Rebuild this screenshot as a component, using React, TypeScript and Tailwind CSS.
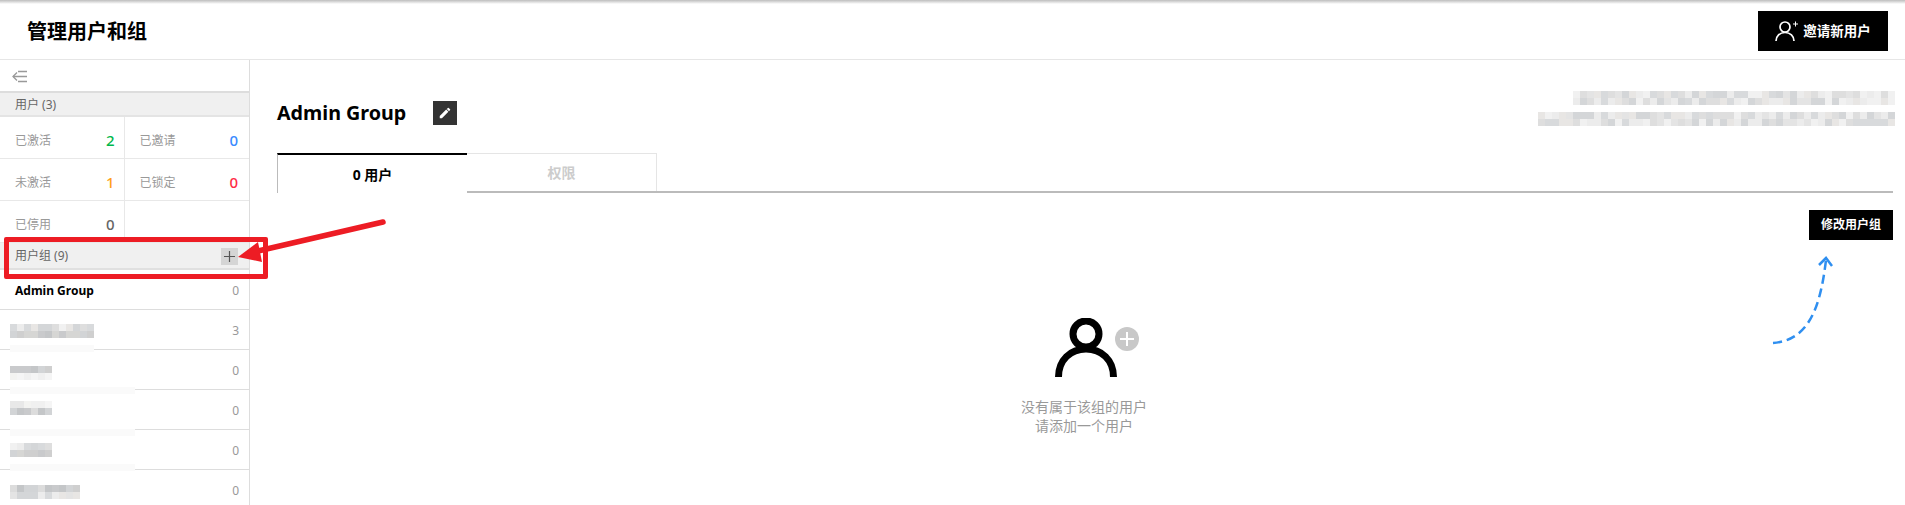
import React from "react";

const dark = ["#c9cacc", "#d2d4d6", "#cfcfcf", "#c4c6c8", "#d6d6d4", "#dcdcdc"];
const mid = ["#e4e4e4", "#d8dadc", "#ececec", "#dedede", "#e8e6e4", "#f1f1f1", "#d4d6d8"];
const light = ["#f0f0f0", "#ececec", "#f5f5f5", "#e8e8e8", "#f3f3f1"];

function hash(n: number) {
  const x = Math.sin(n * 12.9898) * 43758.5453;
  return x - Math.floor(x);
}

function Mosaic({ w, tones, cell, seed }: { w: number; tones: string[][]; cell: number; seed: number }) {
  const cols = Math.round(w / cell);
  const items = [];
  for (let r = 0; r < tones.length; r++) {
    for (let i = 0; i < cols; i++) {
      const t = tones[r];
      const c = t[Math.floor(hash(i + r * 97 + seed * 31 + 1) * t.length)];
      items.push(<div key={`${r}-${i}`} style={{ width: cell, height: cell, background: c }} />);
    }
  }
  return (
    <div className="flex flex-wrap" style={{ width: cols * cell }}>
      {items}
    </div>
  );
}

function Stat({ label, value, color, border }: { label: string; value?: string; color?: string; border?: boolean }) {
  return (
    <div className={`flex h-[42px] items-center justify-between border-b border-[#e8e8e8] pl-[15px] pt-[6px] ${border ? "border-r pr-[9px]" : "pr-[11px]"}`}>
      <span className="text-[12px] text-[#999]">{label}</span>
      {value && <span className={`text-[15px] font-medium ${color}`}>{value}</span>}
    </div>
  );
}

function GroupRow({ w, seed, count, smudge, smudgeTop, tones, top }: { w: number; seed: number; count: string; smudge: number; smudgeTop: number; tones: string[][]; top: number }) {
  return (
    <div className="relative flex h-10 items-start justify-between border-b border-[#ddd] pl-[10px] pr-[10px]">
      <div style={{ marginTop: top }}>
        <Mosaic w={w} tones={tones} cell={7} seed={seed} />
      </div>
      <span className="mt-[12px] text-[12px] text-[#999]">{count}</span>
      <div className="absolute left-[10px] h-[7px] bg-[#fafafa]" style={{ top: smudgeTop, width: smudge }} />
    </div>
  );
}

export default function App() {
  return (
    <div className="relative h-[505px] w-[1905px] overflow-hidden bg-white font-['Noto_Sans','Noto_Sans_CJK_SC',sans-serif]">
      <div className="h-[4px] bg-gradient-to-b from-[#bdbdbd] to-white" />
      <header className="flex h-[56px] items-center justify-between border-b border-[#e6e6e6] pl-[27px] pr-[17px]">
        <h1 className="text-[20px] font-bold text-black">管理用户和组</h1>
        <button className="mt-[-1px] flex h-10 w-[130px] items-center justify-center gap-[3px] bg-black text-[13.5px] font-bold text-white">
          <svg width="25" height="22" viewBox="0 0 25 22" fill="none" stroke="white" strokeWidth="1.7">
            <circle cx="10" cy="7" r="5" />
            <path d="M1 21c0-5 3.800-8.500 9-8.500s9 3.500 9 8.500" />
            <path d="M18 4h5M20.500 1.500v5" strokeWidth="1" />
          </svg>
          邀请新用户
        </button>
      </header>

      <div className="flex h-[445px]">
        <aside className="w-[250px] shrink-0 border-r border-[#ddd]">
          <div className="flex h-[31px] items-center pl-[12px] pt-[2px]">
            <svg width="16" height="14" viewBox="0 0 16 14" fill="none" stroke="#999" strokeWidth="1.3">
              <path d="M5 2.500 1 6.500 5 10.500" />
              <path d="M1 6.500h14M6 1.500h9M6 11.500h9" />
            </svg>
          </div>
          <div className="flex h-[26px] items-center border-y-2 border-t-[#ddd] border-b-[#e4e4e4] bg-[#f0f0f0] pl-[15px] pt-[1px] text-[12px] text-[#666]">
            用户 (3)
          </div>
          <div className="grid grid-cols-2">
            <Stat label="已激活" value="2" color="text-[#00b84c]" border />
            <Stat label="已邀请" value="0" color="text-[#3b8bff]" />
            <Stat label="未激活" value="1" color="text-[#ff9f1a]" border />
            <Stat label="已锁定" value="0" color="text-[#ff2d46]" />
            <Stat label="已停用" value="0" color="text-[#666]" border />
            <Stat label="" />
          </div>
          <div className="flex h-[27px] items-center justify-between border-b-2 border-[#e0e0e0] bg-[#f0f0f0] pl-[15px] pr-[11px] pt-[1px] text-[12px] text-[#666]">
            <span>用户组 (9)</span>
            <span className="flex h-[17px] w-[17px] items-center justify-center bg-[#d5d5d5]">
              <svg width="11" height="11" viewBox="0 0 11 11" stroke="#555" strokeWidth="1.2">
                <path d="M5.500 0v11M0 5.500h11" />
              </svg>
            </span>
          </div>
          <div className="flex h-10 items-start justify-between border-b border-[#ddd] pl-[15px] pr-[10px]">
            <span className="mt-[12px] text-[12px] font-bold text-black">Admin Group</span>
            <span className="mt-[12px] text-[12px] text-[#999]">0</span>
          </div>
          <GroupRow w={84} seed={1} count="3" smudge={84} smudgeTop={35} top={14} tones={[mid, dark]} />
          <GroupRow w={42} seed={2} count="0" smudge={125} smudgeTop={37} top={16} tones={[dark, light]} />
          <GroupRow w={42} seed={3} count="0" smudge={125} smudgeTop={39} top={11} tones={[light, dark]} />
          <GroupRow w={42} seed={4} count="0" smudge={125} smudgeTop={34} top={13} tones={[mid, dark]} />
          <GroupRow w={70} seed={5} count="0" smudge={0} smudgeTop={39} top={15} tones={[dark, mid]} />
        </aside>

        <main className="flex-1 pl-[27px] pr-[12px]">
          <div className="flex items-start justify-between pt-[31px]">
            <div className="flex items-center gap-[27px] pt-[10px]">
              <h2 className="text-[19.7px] font-bold leading-6 text-black">Admin Group</h2>
              <button className="flex h-6 w-6 items-center justify-center bg-[#333]">
                <svg width="14" height="14" viewBox="0 0 24 24" fill="white">
                  <path d="M3 17.250V21h3.750L17.810 9.940l-3.750-3.750L3 17.250zM20.710 7.040a1 1 0 0 0 0-1.410l-2.340-2.340a1 1 0 0 0-1.410 0l-1.830 1.830 3.750 3.750 1.830-1.830z" />
                </svg>
              </button>
            </div>
            <div className="-mr-[2px] flex flex-col items-end gap-[7px]">
              <Mosaic w={319} tones={[mid, mid]} cell={7} seed={6} />
              <Mosaic w={354} tones={[mid, mid]} cell={7} seed={8} />
            </div>
          </div>
          <div className="mt-[27px] flex h-[40px] border-b-2 border-[#bbb]">
            <div className="-mb-[2px] flex h-[40px] w-[190px] items-center justify-center border-l border-t-2 border-l-[#bbb] border-t-black bg-white text-[14px] font-bold text-black">
              0 用户
            </div>
            <div className="flex h-[38px] w-[190px] items-center justify-center border-r border-t border-[#e5e5e5] text-[14px] font-bold text-[#ccc]">
              权限
            </div>
          </div>
          <div className="mt-[17px] flex justify-end">
            <button className="flex h-[30px] w-[84px] items-center justify-center bg-black text-[12px] font-bold text-white">
              修改用户组
            </button>
          </div>
          <div className="mt-[78px] flex flex-col items-center pr-[2px]">
            <div className="relative h-[60px] w-[84px]">
              <svg width="62" height="60" viewBox="0 0 62 60" fill="none" stroke="black" strokeWidth="7" className="absolute left-[13px] top-0">
                <circle cx="31" cy="16" r="13" />
                <path d="M3.500 59c0-17 12-28 27.500-28s27.500 11 27.500 28" />
              </svg>
              <span className="absolute left-[73px] top-[9px] flex h-6 w-6 items-center justify-center rounded-full bg-[#c8c8c8]">
                <svg width="14" height="14" viewBox="0 0 14 14" stroke="white" strokeWidth="2">
                  <path d="M7 0v14M0 7h14" />
                </svg>
              </span>
            </div>
            <p className="mt-[19px] text-center text-[14px] leading-[19px] text-[#999]">
              没有属于该组的用户
              <br />
              请添加一个用户
            </p>
          </div>
        </main>
      </div>

      {/* Annotation overlays */}
      <div className="absolute left-[4px] top-[237px] h-[42px] w-[264px] rounded-[2px] border-[5px] border-[#ed1c24]" />
      <svg className="absolute left-0 top-0" width="1905" height="505" fill="none">
        <path d="M383 222 258 251" stroke="#ed1c24" strokeWidth="5.500" strokeLinecap="round" />
        <path d="M238 257 258 242 262 262Z" fill="#ed1c24" />
        <path d="M1773 343C1808 340 1820 310 1826 260" stroke="#2f8ff0" strokeWidth="2.500" strokeDasharray="9 5" />
        <path d="M1819 265 1826 258 1832 266" stroke="#2f8ff0" strokeWidth="2.500" />
      </svg>
    </div>
  );
}
